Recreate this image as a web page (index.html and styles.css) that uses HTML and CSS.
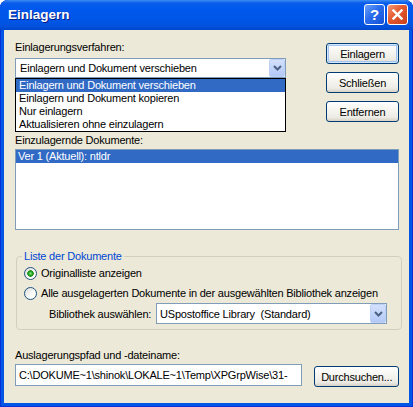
FILE: index.html
```html
<!DOCTYPE html>
<html lang="de">

<head>
    <meta charset="UTF-8">
    <title>Einlagern</title>
    <link rel="stylesheet" href="styles.css">
</head>

<body>
    <div class="window">
        <!-- Titelleiste -->
        <div class="titlebar">
            <span class="title">Einlagern</span>
            <div class="caption-buttons">
                <span class="cap-btn help">?</span>
                <span class="cap-btn close">
                    <svg width="11" height="11" viewBox="0 0 11 11">
                        <line x1="1.5" y1="1.5" x2="9.5" y2="9.5" stroke="#fff" stroke-width="2.4" stroke-linecap="square"></line>
                        <line x1="9.5" y1="1.5" x2="1.5" y2="9.5" stroke="#fff" stroke-width="2.4" stroke-linecap="square"></line>
                    </svg>
                </span>
            </div>
        </div>

        <div class="client">
            <div class="top">
                <div class="method">
                    <div class="label">Einlagerungsverfahren:</div>
                    <div class="combo">
                        <span class="combo-text">Einlagern und Dokument verschieben</span>
                        <span class="combo-arrow">
                            <svg width="9" height="6" viewBox="0 0 9 6">
                                <polyline points="1,1 4.5,4.5 8,1" fill="none" stroke="#4d6185" stroke-width="2"></polyline>
                            </svg>
                        </span>
                        <!-- Aufgeklappte Liste -->
                        <ul class="dropdown">
                            <li class="selected">Einlagern und Dokument verschieben</li>
                            <li>Einlagern und Dokument kopieren</li>
                            <li>Nur einlagern</li>
                            <li>Aktualisieren ohne einzulagern</li>
                        </ul>
                    </div>
                </div>
                <div class="actions">
                    <button class="btn default">Einlagern</button>
                    <button class="btn">Schließen</button>
                    <button class="btn">Entfernen</button>
                </div>
            </div>

            <div class="label docs-label">Einzulagernde Dokumente:</div>
            <ul class="listbox">
                <li class="selected">Ver 1 (Aktuell): ntldr</li>
            </ul>

            <fieldset class="group">
                <legend>Liste der Dokumente</legend>
                <div class="radio-row">
                    <span class="radio checked"></span>
                    <span>Originalliste anzeigen</span>
                </div>
                <div class="radio-row">
                    <span class="radio"></span>
                    <span>Alle ausgelagerten Dokumente in der ausgewählten Bibliothek anzeigen</span>
                </div>
                <div class="library-row">
                    <span class="library-label">Bibliothek auswählen:</span>
                    <div class="combo library">
                        <span class="combo-text">USpostoffice Library&nbsp; (Standard)</span>
                        <span class="combo-arrow">
                            <svg width="9" height="6" viewBox="0 0 9 6">
                                <polyline points="1,1 4.5,4.5 8,1" fill="none" stroke="#4d6185" stroke-width="2"></polyline>
                            </svg>
                        </span>
                    </div>
                </div>
            </fieldset>

            <div class="label path-label">Auslagerungspfad und -dateiname:</div>
            <div class="path-row">
                <div class="textbox">C:\DOKUME~1\shinok\LOKALE~1\Temp\XPGrpWise\31-</div>
                <button class="btn browse">Durchsuchen...</button>
            </div>
        </div>
    </div>
</body>

</html>
```

FILE: styles.css
```css
/* Grundlayout */
body {
    margin: 0;
    font-family: "Liberation Sans", Arial, sans-serif;
    font-size: 11px;
    color: #000;
}

.window {
    width: 413px;
    height: 407px;
    display: flex;
    flex-direction: column;
    background: #0055e5;
    border-radius: 8px 8px 0 0;
    box-shadow: inset 0 0 0 1px #0831d9;
    overflow: hidden;
}

/* Titelleiste */
.titlebar {
    height: 30px;
    flex-shrink: 0;
    box-sizing: border-box;
    display: flex;
    align-items: center;
    justify-content: space-between;
    padding: 0 5px 1px 8px;
    background: linear-gradient(#3d8cf5 0, #0a5de9 3px, #0058ee 8px, #0055e5 22px, #0050da 27px, #0046cc 30px);
}

.title {
    color: #fff;
    font-weight: bold;
    font-size: 13.5px;
    text-shadow: 1px 1px #0a1e84;
}

.caption-buttons {
    display: flex;
    gap: 2px;
}

.cap-btn {
    width: 21px;
    height: 21px;
    box-sizing: border-box;
    border: 1px solid #fff;
    border-radius: 3px;
    display: flex;
    align-items: center;
    justify-content: center;
    color: #fff;
}

.help {
    background: linear-gradient(135deg, #6ea2f8 0, #2a6cec 45%, #1452d8 100%);
    font-weight: bold;
    font-size: 15px;
}

.close {
    background: linear-gradient(135deg, #f39a78 0, #e4582e 45%, #c8401c 100%);
}

/* Arbeitsbereich */
.client {
    flex: 1;
    margin: 0 4px 4px;
    padding: 11px 10px 0 11px;
    background: #ece9d8;
    letter-spacing: -0.2px;
}

.label {
    height: 13px;
    line-height: 13px;
    white-space: nowrap;
}

.top {
    display: flex;
    justify-content: space-between;
}

.method {
    width: 271px;
}

.combo {
    position: relative;
    margin-top: 4px;
    height: 20px;
    box-sizing: border-box;
    border: 1px solid #7f9db9;
    background: #fff;
    display: flex;
    align-items: center;
    justify-content: space-between;
    padding-left: 4px;
}

.combo-text {
    white-space: nowrap;
}

.combo-arrow {
    width: 16px;
    height: 18px;
    box-sizing: border-box;
    border: 1px solid #bcd0f8;
    border-radius: 2px;
    background: linear-gradient(#d4e1fc, #b3c8f6);
    display: flex;
    align-items: center;
    justify-content: center;
}

.dropdown {
    position: absolute;
    top: calc(100% + 1px);
    left: -1px;
    width: 271px;
    box-sizing: border-box;
    margin: 0;
    padding: 0;
    list-style: none;
    border: 1px solid #000;
    background: #fff;
}

.dropdown li {
    height: 13px;
    line-height: 13px;
    padding-left: 3px;
    white-space: nowrap;
}

.selected {
    background: #316ac5;
    color: #fff;
}

/* Schaltflächen */
.actions {
    margin-top: 2px;
    display: flex;
    flex-direction: column;
    gap: 8px;
}

.btn {
    width: 73px;
    height: 21px;
    padding: 0;
    font: inherit;
    letter-spacing: inherit;
    color: #000;
    border: 1px solid #003c74;
    border-radius: 3px;
    background: linear-gradient(#fff 0, #f5f4ef 45%, #ecebe5 80%, #d8d2c6 100%);
}

.btn.default {
    box-shadow: inset 0 0 0 1px #cee7ff, inset 0 0 0 2px #a8c4f0;
}

/* Dokumentliste */
.docs-label {
    margin-top: 12px;
}

.listbox {
    margin: 2px 0 0;
    padding: 0;
    list-style: none;
    height: 81px;
    box-sizing: border-box;
    border: 1px solid #7f9db9;
    background: #fff;
}

.listbox li {
    height: 13px;
    line-height: 13px;
    padding-left: 2px;
}

/* Gruppe */
.group {
    margin: 20px 0 0 1px;
    width: 386px;
    box-sizing: border-box;
    border: 1px solid #d0d0bf;
    border-radius: 4px;
    padding: 0 5px 5px;
}

.group legend {
    padding: 0 2px;
    line-height: 13px;
    color: #0046d5;
}

.radio-row {
    height: 20px;
    display: flex;
    align-items: center;
    gap: 4px;
    padding-left: 2px;
    white-space: nowrap;
}

.radio {
    width: 13px;
    height: 13px;
    box-sizing: border-box;
    border: 1px solid #1c5180;
    border-radius: 50%;
    background: linear-gradient(135deg, #dcdcd7 0, #fff 70%);
    flex-shrink: 0;
}

.radio.checked {
    background: radial-gradient(circle, #8ae68a 0, #21a121 2px, #1e911e 3px, transparent 3.5px), linear-gradient(135deg, #dcdcd7 0, #fff 70%);
}

.library-row {
    height: 21px;
    display: flex;
    align-items: center;
    margin-left: 27px;
}

.library-label {
    width: 107px;
    white-space: nowrap;
}

.combo.library {
    margin-top: 0;
    width: 231px;
    height: 21px;
    padding-left: 3px;
}

.combo.library .combo-arrow {
    height: 19px;
}

/* Pfad */
.path-label {
    margin-top: 19px;
}

.path-row {
    margin-top: 2px;
    display: flex;
    gap: 12px;
}

.textbox {
    width: 289px;
    height: 22px;
    line-height: 20px;
    box-sizing: border-box;
    border: 1px solid #7f9db9;
    background: #fff;
    padding-left: 3px;
    white-space: nowrap;
    overflow: hidden;
}

.btn.browse {
    width: 85px;
    margin-top: 2px;
}
```
